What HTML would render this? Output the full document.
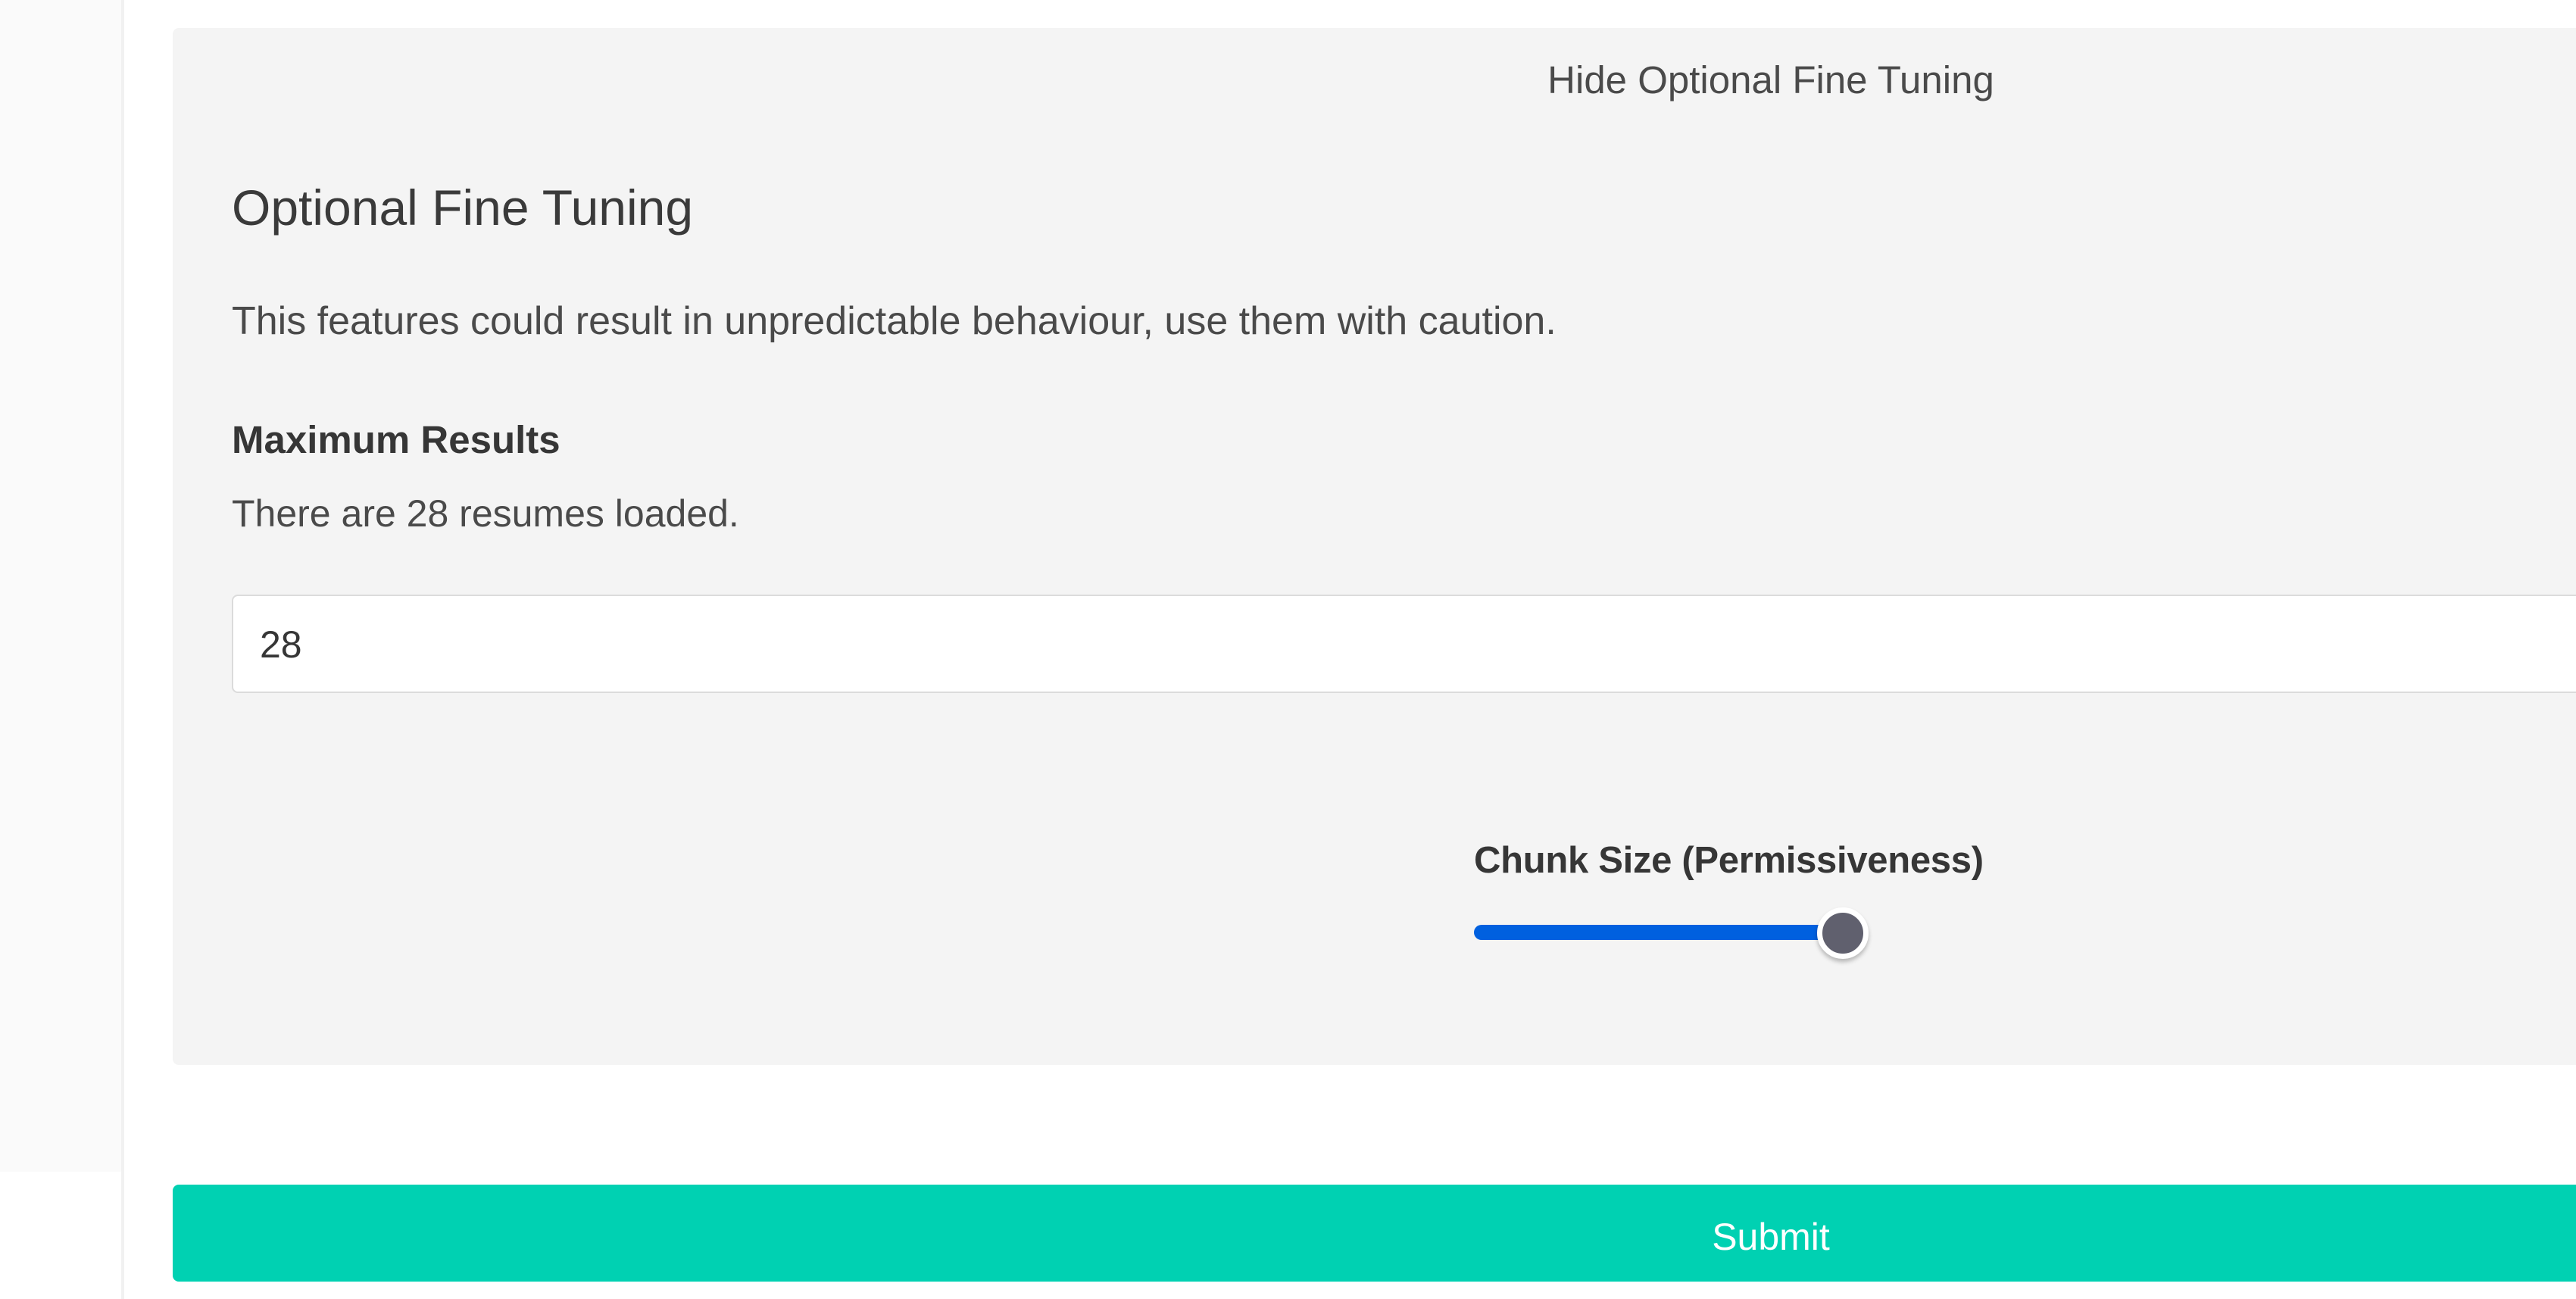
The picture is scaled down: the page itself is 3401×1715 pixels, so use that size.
<!DOCTYPE html>
<html><head><style>
html,body{margin:0;padding:0;width:3401px;height:1715px;overflow:hidden;background:#fff;font-family:"Liberation Sans",Arial,sans-serif;}
.left{position:absolute;left:0;top:0;width:160px;height:1547px;background:#fafafa;}
.edge{position:absolute;left:160px;top:0;width:4px;height:1715px;background:#f1f1f1;}
.top{position:absolute;left:228px;top:37px;width:3300px;height:126px;background:#f4f4f4;border-radius:8px 8px 0 0;}
.body{position:absolute;left:228px;top:163px;width:3300px;height:1243px;background:#f4f4f4;border-radius:0 0 8px 8px;}
.t{position:absolute;white-space:nowrap;color:#363636;}
.input{position:absolute;left:306px;top:785px;width:3200px;height:126px;background:#fff;border:2px solid #dbdbdb;border-radius:8px;}
.track{position:absolute;left:1946px;top:1221px;width:486px;height:20px;background:#0060df;border-radius:10px;}
.thumb{position:absolute;left:2399px;top:1198px;width:54px;height:54px;border-radius:50%;background:#60606e;border:7px solid #fff;box-shadow:0 4px 6px rgba(0,0,0,.25);}
.submit{position:absolute;left:228px;top:1564px;width:3300px;height:128px;background:#00d1b2;border-radius:8px;}
</style></head><body>
<div class="left"></div><div class="edge"></div>
<div class="top"></div>
<div class="t" style="left:0;width:4676px;text-align:center;top:76px;font-size:51px;color:#4a4a4a">Hide Optional Fine Tuning</div>
<div class="body"></div>
<div class="t" style="left:306px;top:236px;font-size:66px;color:#3a3a3a">Optional Fine Tuning</div>
<div class="t" style="left:306px;top:394px;font-size:52px;color:#4a4a4a">This features could result in unpredictable behaviour, use them with caution.</div>
<div class="t" style="left:306px;top:551px;font-size:51px;font-weight:bold">Maximum Results</div>
<div class="t" style="left:306px;top:649px;font-size:50px;color:#4a4a4a">There are 28 resumes loaded.</div>
<div class="input"></div>
<div class="t" style="left:343px;top:822px;font-size:50px;color:#363636">28</div>
<div class="t" style="left:1946px;top:1108px;font-size:49px;font-weight:bold;letter-spacing:-0.3px">Chunk Size (Permissiveness)</div>
<div class="track"></div><div class="thumb"></div>
<div class="submit"></div>
<div class="t" style="left:0;width:4676px;text-align:center;top:1604px;font-size:50px;color:#fff">Submit</div>
</body></html>
